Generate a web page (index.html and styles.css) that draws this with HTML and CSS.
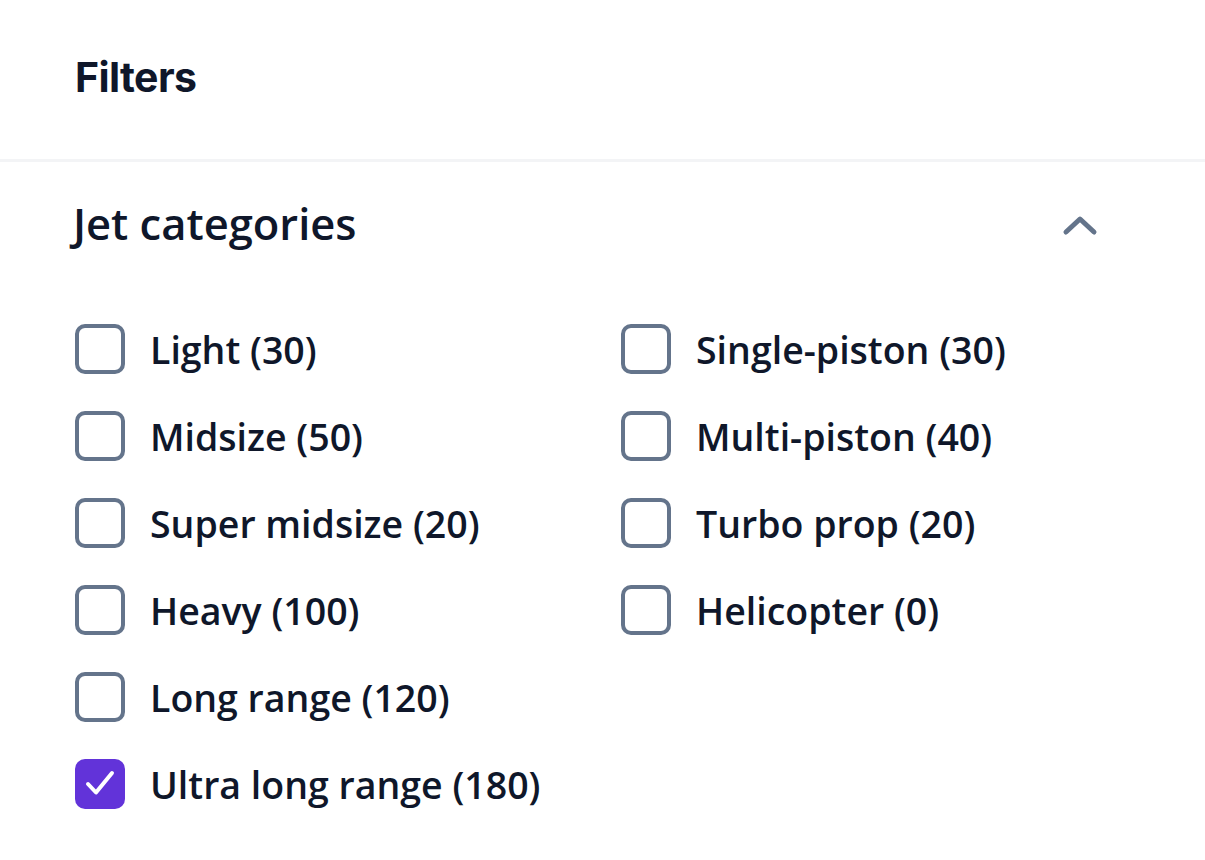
FILE: index.html
```html
<!DOCTYPE html>
<html>
<head>
<meta charset="utf-8">
<link rel="stylesheet" href="styles.css">
</head>
<body>
<div class="panel">
  <header class="top">
    <h1 class="top-title">Filters</h1>
  </header>
  <section class="group">
    <div class="group-head">
      <h2 class="group-title">Jet categories</h2>
      <svg class="chev" width="36" height="22" viewBox="0 0 36 22"><path d="M4 18 L18 5 L32 18" fill="none" stroke="#64748b" stroke-width="5" stroke-linecap="round" stroke-linejoin="round"/></svg>
    </div>
    <div class="grid">
      <label class="opt"><span class="box"></span><span class="txt">Light (30)</span></label>
      <label class="opt"><span class="box"></span><span class="txt">Single-piston (30)</span></label>
      <label class="opt"><span class="box"></span><span class="txt">Midsize (50)</span></label>
      <label class="opt"><span class="box"></span><span class="txt">Multi-piston (40)</span></label>
      <label class="opt"><span class="box"></span><span class="txt">Super midsize (20)</span></label>
      <label class="opt"><span class="box"></span><span class="txt">Turbo prop (20)</span></label>
      <label class="opt"><span class="box"></span><span class="txt">Heavy (100)</span></label>
      <label class="opt"><span class="box"></span><span class="txt">Helicopter (0)</span></label>
      <label class="opt"><span class="box"></span><span class="txt">Long range (120)</span></label>
      <span></span>
      <label class="opt"><span class="box checked"><svg width="50" height="50" viewBox="0 0 50 50"><path d="M13 25 L21 33.5 L37 14" fill="none" stroke="#fff" stroke-width="4" stroke-linecap="round" stroke-linejoin="round"/></svg></span><span class="txt">Ultra long range (180)</span></label>
    </div>
  </section>
</div>
</body>
</html>
```
FILE: styles.css
```css
html, body { margin: 0; padding: 0; background: #fff; }
body { color: #0f172a; font-family: "Open Sans", "Noto Sans", sans-serif; }
.panel { width: 1205px; }
.top {
  height: 162px;
  display: flex;
  align-items: center;
  padding-left: 75px;
  border-bottom: 3px solid #f3f4f6;
  box-sizing: border-box;
  padding-bottom: 6px;
}
.top-title {
  margin: 0;
  font-family: Inter, "Liberation Sans", sans-serif;
  font-weight: 700;
  font-size: 41px;
  letter-spacing: -0.6px;
  color: #0f172a;
}
.group { padding: 0 108px 0 73px; }
.group-head {
  display: flex;
  align-items: center;
  justify-content: space-between;
  height: 122px;
}
.group-title {
  margin: 0;
  font-weight: 600;
  font-size: 43.5px;
  color: #0f172a;
}
.chev { margin-right: -1px; margin-top: 4px; }
.grid {
  display: grid;
  grid-template-columns: 546px 1fr;
  row-gap: 37px;
  padding-left: 2px;
  margin-top: 40px;
}
.opt { display: flex; align-items: center; gap: 25px; height: 50px; }
.box {
  width: 50px; height: 50px;
  box-sizing: border-box;
  border: 4.5px solid #64748b;
  border-radius: 10px;
  flex: none;
  display: flex; align-items: center; justify-content: center;
}
.box.checked { background: #6233d9; border: 0; }
.txt { font-size: 37.5px; font-weight: 600; color: #0f172a; }
```
